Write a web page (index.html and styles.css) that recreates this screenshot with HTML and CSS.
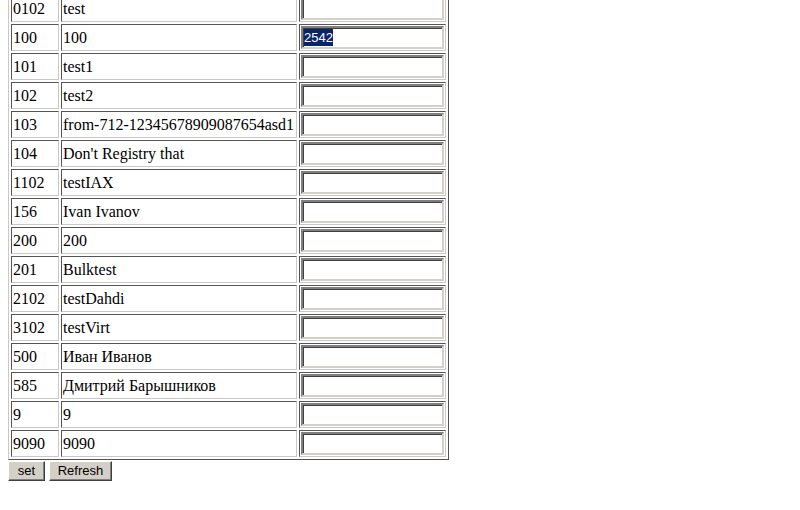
FILE: index.html
```html
<!DOCTYPE html>
<html>
<head>
<meta charset="utf-8">
<link rel="stylesheet" href="styles.css">
</head>
<body>
<form class="form">
<table class="grid">
<tr><td class="c1">0102</td><td class="c2">test</td><td class="c3"><input class="field" type="text"></td></tr>
<tr><td class="c1">100</td><td class="c2">100</td><td class="c3"><div class="field"><span class="sel">2542</span></div></td></tr>
<tr><td class="c1">101</td><td class="c2">test1</td><td class="c3"><input class="field" type="text"></td></tr>
<tr><td class="c1">102</td><td class="c2">test2</td><td class="c3"><input class="field" type="text"></td></tr>
<tr><td class="c1">103</td><td class="c2">from-712-12345678909087654asd1</td><td class="c3"><input class="field" type="text"></td></tr>
<tr><td class="c1">104</td><td class="c2">Don't Registry that</td><td class="c3"><input class="field" type="text"></td></tr>
<tr><td class="c1">1102</td><td class="c2">testIAX</td><td class="c3"><input class="field" type="text"></td></tr>
<tr><td class="c1">156</td><td class="c2">Ivan Ivanov</td><td class="c3"><input class="field" type="text"></td></tr>
<tr><td class="c1">200</td><td class="c2">200</td><td class="c3"><input class="field" type="text"></td></tr>
<tr><td class="c1">201</td><td class="c2">Bulktest</td><td class="c3"><input class="field" type="text"></td></tr>
<tr><td class="c1">2102</td><td class="c2">testDahdi</td><td class="c3"><input class="field" type="text"></td></tr>
<tr><td class="c1">3102</td><td class="c2">testVirt</td><td class="c3"><input class="field" type="text"></td></tr>
<tr><td class="c1">500</td><td class="c2">Иван Иванов</td><td class="c3"><input class="field" type="text"></td></tr>
<tr><td class="c1">585</td><td class="c2">Дмитрий Барышников</td><td class="c3"><input class="field" type="text"></td></tr>
<tr><td class="c1">9</td><td class="c2">9</td><td class="c3"><input class="field" type="text"></td></tr>
<tr><td class="c1">9090</td><td class="c2">9090</td><td class="c3"><input class="field" type="text"></td></tr>
</table>
<div class="buttons"><button type="button" class="btn">set</button><button type="button" class="btn">Refresh</button></div>
</form>
</body>
</html>
```
FILE: styles.css
```css
html, body {
  background: #ffffff;
}
body {
  margin: 0 8px;
  font-family: "Liberation Serif", "Times New Roman", serif;
  font-size: 16px;
  color: #000;
}
.form {
  margin: 0;
}
.grid {
  margin-top: -8px;
  border-collapse: separate;
  border-spacing: 2px;
  border: 1px solid;
  border-color: #c8c8c8 #555555 #555555 #c8c8c8;
  table-layout: fixed;
}
.grid td {
  border: 1px solid;
  border-color: #555555 #c8c8c8 #c8c8c8 #555555;
  padding: 1px;
  height: 23px;
  vertical-align: middle;
  white-space: nowrap;
  line-height: 19px;
}
.c1 { width: 44px; }
.c2 { width: 232px; }
.c3 { width: 143px; }
.field {
  display: block;
  box-sizing: border-box;
  width: 143px;
  height: 23px;
  margin: 0;
  padding: 0 1px;
  border: 2px solid;
  border-color: #808080 #d4d0c8 #d4d0c8 #808080;
  box-shadow: inset 1px 1px 0 #404040;
  background: #ffffff;
  font-family: "Liberation Sans", Arial, sans-serif;
  font-size: 13px;
  line-height: 19px;
  outline: none;
}
.sel {
  background: #0a246a;
  color: #ffffff;
  padding: 1px 0;
}
.buttons {
  display: flex;
  gap: 4px;
  margin-top: 1px;
}
.btn {
  box-sizing: border-box;
  height: 20px;
  margin: 0;
  padding: 0 7px;
  background: #d4d0c8;
  border: 1px solid;
  border-color: #ffffff #404040 #404040 #ffffff;
  box-shadow: inset -1px -1px 0 #808080;
  font-family: "Liberation Sans", Arial, sans-serif;
  font-size: 13px;
  color: #000;
  line-height: 16px;
}
.btn:first-child {
  width: 37px;
}
.btn:last-child {
  width: 63px;
}
```
